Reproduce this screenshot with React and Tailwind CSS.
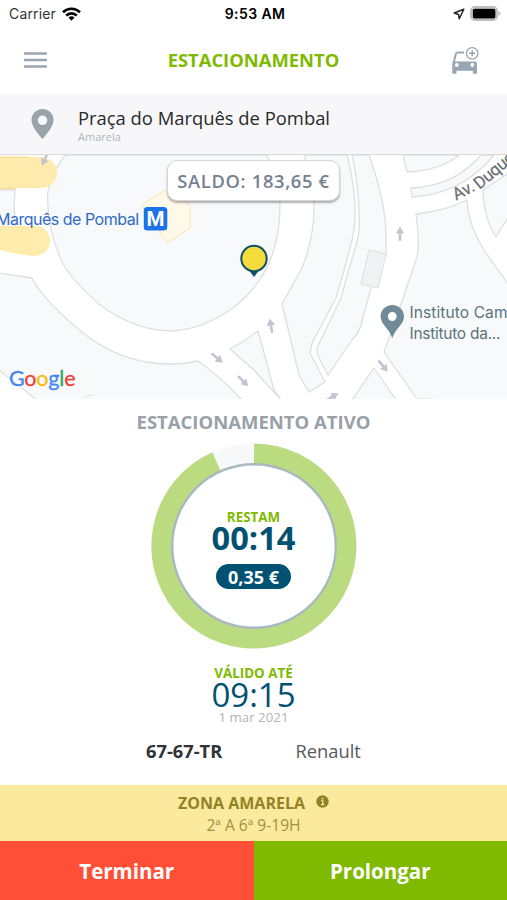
import React from "react";

const BLOCKS = [
  // inside of the roundabout
  "M65 155 Q47 180 47.500 199 Q48 232 63 264 Q72 280 100 305 Q135 331 173 331 Q203 329 233 308 Q258 288 269 263 Q280 238 280 205 Q279 180 267 155Z",
  "M304 155 Q314 180 314 207 Q314 240 301 270 L282 304 L289 333 L299 375 L309 392 L325 382 L310 353 L312 343 L336 298 L343 274 L352 240 Q355 228 355 217 Q356 190 347 155Z",
  "M352 155 Q359 185 359 217 Q360 232 357 242 L348 272 L341 298 L317 348 Q315 352 328 375 L352 340 Q359 333 361 325 L371 288 L386 254 L386 233 Q385 200 369 155Z",
  "M416 214 Q420 243 417 257 L400 307 L384 352 L417 399 L510 402 L510 287 L484 250 Q468 225 467 200 Q445 211 416 214Z",
  "M510 172 L483 190 Q484 219 496 237 L510 214Z",
  "M497 270 Z",
  "M403 155 L407 172 Q442 170 459 155Z",
  "M411 188 Q455 186 481 155 L494 155 Q462 194 412 197Z",
  "M374 368 L352 400 L396 400Z",
  "M230 349 Q245 341 258 331 L266 360 L274 390 L281 400 L254 370Z",
  "M-2 273 L32 278 Q43 300 83 333 Q122 364 170 364 Q185 364 198 361 Q222 378 242 400 L37 400 L0 371 L-2 370Z",
  "M-2 190 L15 190 Q13 215 17 235 L-2 235Z",
];

const ARROWS = [
  [400, 234, 0],
  [271, 326, -10],
  [217, 358, 130],
  [243, 381, 135],
  [383, 366, 140],
  [332, 397, 60],
  [45, 159, 205],
];

const GOOGLE = [
  ["G", "#4285f4"],
  ["o", "#ea4335"],
  ["o", "#fbbc05"],
  ["g", "#4285f4"],
  ["l", "#34a853"],
  ["e", "#ea4335"],
];

function StatusBar() {
  return (
    <div className="grid h-7 shrink-0 grid-cols-3 items-center pl-[9px] pr-[6px] pb-px font-['Inter',sans-serif] text-[14px] text-black">
      <div className="flex items-center gap-[6px]">
        <span className="tracking-[0.15px] text-[#333]">Carrier</span>
        <svg width="19" height="14" viewBox="0 0 19 14" fill="none" stroke="#000" strokeWidth="2.700">
          <path d="M1 5.200a12.200 12.200 0 0 1 17 0" />
          <path d="M4.200 8.600a7.600 7.600 0 0 1 10.600 0" />
          <path d="M9.500 13.700l-3-3.100a4.300 4.300 0 0 1 6 0z" fill="#000" stroke="none" />
        </svg>
      </div>
      <span className="text-center font-semibold tracking-[0.4px]">9:53 AM</span>
      <div className="flex items-center justify-end gap-[5px]">
        <svg width="12" height="12" viewBox="0 0 12 12" fill="none" stroke="#222" strokeWidth="1.500" strokeLinejoin="round">
          <path d="M10.800 1.200L1.200 5l4.300 1.500.800 4.300z" />
        </svg>
        <svg width="31" height="15" viewBox="0 0 31 15">
          <rect x="1" y="1" width="26" height="13" rx="3.800" fill="#ddd" stroke="#bdbdbd" strokeWidth="1.800" />
          <rect x="2.800" y="2.800" width="22.600" height="9.600" rx="1.600" fill="#000" />
          <path d="M28.500 5v5q2-1 2-2.500t-2-2.500z" fill="#bbb" />
        </svg>
      </div>
    </div>
  );
}

function Header() {
  return (
    <header className="grid h-[66px] shrink-0 grid-cols-[1fr_auto_1fr] items-center pb-[3px] pl-6 pr-[27px]">
      <svg width="23" height="16" viewBox="0 0 23 16" stroke="#98a5b3" strokeWidth="2.300">
        <path d="M0 1.500h23M0 8h23M0 14.500h23" />
      </svg>
      <h1 className="pl-[3px] text-[18.4px] font-bold leading-6 text-[#80ba00]">ESTACIONAMENTO</h1>
      <svg className="mt-[3px] justify-self-end" width="30" height="30" viewBox="0 0 30 30" fill="none">
        <path d="M3.800 16L6 7.500q.3-1 1.400-1H14" stroke="#98a5b3" strokeWidth="1.900" />
        <path
          fillRule="evenodd"
          fill="#98a5b3"
          d="M3 15.500h23.200l.8 2V27q0 .7-.7.700h-2.700q-.7 0-.7-.7v-2.200H6.500V27q0 .7-.7.700H3q-.7 0-.7-.7V17zM6.800 17.100a1.900 1.900 0 1 0 0 3.800a1.900 1.900 0 0 0 0-3.800zM22.300 17.100a1.900 1.900 0 1 0 0 3.800a1.900 1.900 0 0 0 0-3.800z"
        />
        <circle cx="22.200" cy="7.300" r="7.500" fill="#fff" />
        <circle cx="22.200" cy="7.300" r="5.700" stroke="#98a0a8" strokeWidth="1.200" />
        <path d="M22.200 4.300v6M19.200 7.300h6" stroke="#98a0a8" strokeWidth="1.400" />
      </svg>
    </header>
  );
}

function Location() {
  return (
    <div className="flex h-[61px] shrink-0 items-center gap-[24px] border-b border-[#d9d9dc] bg-[#f7f7f9] pl-[31px]">
      <svg width="23" height="30" viewBox="0 0 23 30">
        <path
          fillRule="evenodd"
          fill="#98a4aa"
          d="M11.500 0C5 0 .5 5 .5 11c0 6.500 6 13 11 19c5-6 11-12.500 11-19c0-6-4.500-11-11-11zM11.500 6.500a4.800 4.800 0 1 1 0 9.600a4.800 4.800 0 0 1 0-9.600z"
        />
      </svg>
      <div className="flex flex-col pt-px">
        <span className="text-[18.4px] leading-[23px] text-[#29292b]">Praça do Marquês de Pombal</span>
        <span className="text-[11px] leading-[15px] text-[#b1b5ba]">Amarela</span>
      </div>
    </div>
  );
}

function ParkingMap() {
  return (
    <div className="relative h-[244px] shrink-0 overflow-hidden bg-white">
      <svg className="block" width="507" height="244" viewBox="0 155 507 244">
        <g fill="#f8f9fb" stroke="#dddfe1" strokeWidth="1.300" strokeLinejoin="round">
          {BLOCKS.map((d) => (
            <path key={d} d={d} />
          ))}
        </g>
        <path d="M0 157h44q13 4 13 17q-3 14-17 14H0z" fill="#ffecac" />
        <path d="M0 157h29M0 188.500h16" stroke="#fbd68a" strokeWidth="1" />
        <path d="M0 226h38q13 4 12 17q-3 13-17 13Q15 254 0 250z" fill="#ffecac" />
        <path d="M142 205L165 190L190 205V228L167 243L160 233V227H150z" fill="#fff9e9" stroke="#fde3b3" />
        <path d="M369 250L386 254L378 288L361 284z" fill="#f1f2f4" stroke="#dcdee0" />
        {ARROWS.map(([x, y, angle]) => (
          <g key={`${x}-${y}`} transform={`translate(${x} ${y}) rotate(${angle})`} fill="#c4c4d2">
            <path d="M0-7.500L4.200-.5H1.300V7h-2.600V-.5h-2.900z" />
          </g>
        ))}
        <path d="M84 399a6 5 0 0 1 9-3" fill="none" stroke="#dddfe1" />

        <g fontFamily="Inter, sans-serif">
          <text x="-4" y="225" fontSize="16" fill="#2f6bc6" textLength="143">Marquês de Pombal</text>
          <text x="409.500" y="318" fontSize="15.500" fill="#5a7479" textLength="98">Instituto Cam</text>
          <text x="409.500" y="338.500" fontSize="15.500" fill="#5a7479" textLength="91">Instituto da...</text>
        </g>
        <g fontFamily="Roboto, sans-serif" fontSize="17" fill="#6c6f72" stroke="#6c6f72" strokeWidth="0.200">
          <text transform="translate(456 200.500) rotate(-27)">Av.</text>
          <text transform="translate(479.500 190) rotate(-40)" textLength="47">Duque</text>
        </g>

        <rect x="143.800" y="207" width="23.500" height="23.500" rx="3.500" fill="#1a73e8" />
        <text x="155.500" y="226" textAnchor="middle" fontFamily="Roboto, sans-serif" fontWeight="700" fontSize="20.500" fill="#fff">
          M
        </text>

        <path
          fillRule="evenodd"
          fill="#718a97"
          d="M392.300 305c-6.600 0-11.700 5-11.700 11.500c0 8 8 11 11.700 21.500c3.700-10.500 11.700-13.500 11.700-21.500c0-6.500-5.100-11.500-11.700-11.500zM392.300 312a4.500 4.500 0 1 1 0 9a4.500 4.500 0 0 1 0-9z"
        />

        {/* parked car */}
        <path d="M248 269h12l-6 8z" fill="#0b5068" />
        <circle cx="254" cy="258.500" r="12.700" fill="#f5dc3d" stroke="#0b5068" strokeWidth="2" />

        <text x="9" y="385.500" fontFamily="Lato, sans-serif" fontSize="21.500" strokeWidth="0.300" textLength="66.500">
          {GOOGLE.map(([letter, color], i) => (
            <tspan key={i} fill={color} stroke={color}>{letter}</tspan>
          ))}
        </text>
      </svg>
      <div className="absolute left-[167px] top-[5px] flex h-[41px] w-[173px] items-center justify-center rounded-[10px] border border-[#d5d5d7] bg-white text-[18.3px] font-semibold tracking-[0.7px] text-[#75818f] shadow-[0_2px_2px_rgba(0,0,0,0.3)]">
        SALDO: 183,65 €
      </div>
    </div>
  );
}

function Timer() {
  return (
    <div className="relative mt-[9px] h-[206px] w-[206px]">
      <svg className="block" width="206" height="206" viewBox="-103 -103 206 206" fill="none">
        <circle r="92" stroke="#f7f8fa" strokeWidth="21" />
        <path d="M0-92A92 92 0 1 1 -37.400-84.100" stroke="#bbdb80" strokeWidth="21" />
        <circle r="81.800" fill="#fff" stroke="#a9b9c0" strokeWidth="2.400" />
      </svg>
      <div className="absolute inset-0 flex flex-col items-center pt-[66px]">
        <span className="text-[13.4px] font-bold leading-4 text-[#80ba00]">RESTAM</span>
        <span className="text-[32.6px] font-bold leading-[26px] text-[#005172]">00:14</span>
        <span className="mt-[13px] flex h-[25px] w-[75px] items-center justify-center rounded-full bg-[#005172] pt-px text-[18px] font-bold text-white">
          0,35 €
        </span>
      </div>
    </div>
  );
}

function ActiveParking() {
  return (
    <main className="flex flex-1 flex-col items-center bg-white pt-[11px]">
      <h2 className="text-[18.5px] font-bold leading-6 text-[#98a0a8]">ESTACIONAMENTO ATIVO</h2>
      <Timer />
      <span className="mt-[16px] text-[13.4px] font-bold leading-4 text-[#80ba00]">VÁLIDO ATÉ</span>
      <span className="text-[33px] leading-[28px] text-[#005172]">09:15</span>
      <span className="text-[13.3px] leading-4 text-[#b0b3b7]">1 mar 2021</span>
      <div className="mt-[14px] grid w-full grid-cols-2 text-[18.3px] leading-6">
        <span className="pl-[146px] font-bold text-[#303236]">67-67-TR</span>
        <span className="pl-[42px] text-[#55585c]">Renault</span>
      </div>
    </main>
  );
}

function Zone() {
  return (
    <div className="flex h-14 shrink-0 flex-col items-center bg-[#fbea9e] pt-[7px] text-[#938126]">
      <div className="flex items-center gap-[11px]">
        <span className="text-[16px] font-bold leading-[22px]">ZONA AMARELA</span>
        <svg className="mb-[3px]" width="13" height="13" viewBox="0 0 13 13">
          <circle cx="6.500" cy="6.500" r="6.200" fill="#938126" />
          <path d="M6.500 2.700v1.800M5 5.900h1.700v3.600M4.900 9.600h3.300" stroke="#fbea9e" strokeWidth="1.400" />
        </svg>
      </div>
      <span className="text-[15.6px] leading-[22px] text-[#a39140]">2ª A 6ª 9-19H</span>
    </div>
  );
}

function Actions() {
  return (
    <div className="grid h-[59px] shrink-0 grid-cols-2 text-[20.5px] font-bold text-white">
      <button className="bg-[#ff4f37] pt-0.5">Terminar</button>
      <button className="bg-[#80ba00] pt-0.5">Prolongar</button>
    </div>
  );
}

export default function App() {
  return (
    <div className="flex h-[900px] w-[507px] flex-col overflow-hidden bg-white font-['Open_Sans',sans-serif]">
      <StatusBar />
      <Header />
      <Location />
      <ParkingMap />
      <ActiveParking />
      <Zone />
      <Actions />
    </div>
  );
}
